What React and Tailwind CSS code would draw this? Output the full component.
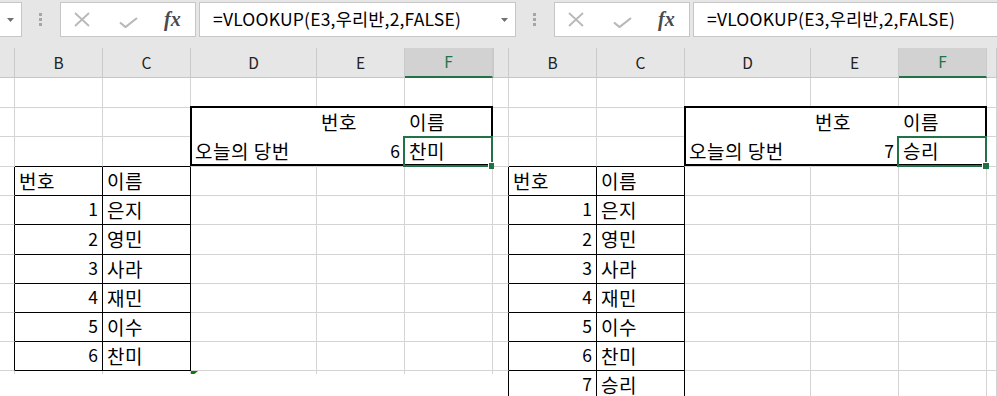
import React from 'react';

const FONT = { fontFamily: '"Noto Sans CJK KR", "Noto Sans", sans-serif' };

const COLS = [
  { key: 'A', w: 'w-[15px]' },
  { key: 'B', w: 'w-[88px]' },
  { key: 'C', w: 'w-[88px]' },
  { key: 'D', w: 'w-[126px]' },
  { key: 'E', w: 'w-[88px]' },
  { key: 'F', w: 'w-[88px]' },
  { key: 'G', w: 'flex-1' },
];

const ROW_H = [
  'h-[30px]', 'h-[29px]', 'h-[30px]', 'h-[29px]', 'h-[29px]', 'h-[30px]',
  'h-[29px]', 'h-[29px]', 'h-[29px]', 'h-[29px]', 'h-[29px]', 'h-[29px]',
];

const NAMES = ['은지', '영민', '사라', '재민', '이수', '찬미', '승리'];

function buildCells(count, pick) {
  const c = {
    E2: { v: '번호' },
    F2: { v: '이름' },
    D3: { v: '오늘의 당번' },
    E3: { v: String(pick), num: true },
    F3: { v: NAMES[pick - 1] },
    B4: { v: '번호' },
    C4: { v: '이름' },
  };
  for (let i = 0; i < count; i++) {
    c['B' + (i + 5)] = { v: String(i + 1), num: true };
    c['C' + (i + 5)] = { v: NAMES[i] };
  }
  return c;
}

function borders(r, col, last) {
  // right edge
  let right = 'border-r-[#d4d4d4]';
  if (['A', 'B', 'C'].includes(col) && r >= 4 && r <= last) right = 'border-r-black';
  if (['D', 'E'].includes(col) && (r === 2 || r === 3)) right = 'border-r-white';
  // bottom edge
  let bottom = 'border-b-[#d4d4d4]';
  if (['B', 'C'].includes(col) && r >= 3 && r <= last) bottom = 'border-b-black';
  if (['D', 'E', 'F'].includes(col) && r === 2) bottom = 'border-b-white';
  return right + ' ' + bottom;
}

function Toolbar() {
  return (
    <div className="h-[48px] bg-[#e6e6e6] pt-[2px] flex items-start">
      <div className="w-[22px] h-[35px] shrink-0 bg-white border-y border-r border-[#c6c6c6] flex items-center pl-[7px]">
        <svg width="7" height="4" viewBox="0 0 7 4">
          <path d="M0 0h7L3.5 4z" fill="#707070" />
        </svg>
      </div>
      <div className="ml-[17px] mt-[11px] flex flex-col gap-[2px] shrink-0">
        <div className="w-[3px] h-[3px] bg-[#a6a6a6]" />
        <div className="w-[3px] h-[3px] bg-[#a6a6a6]" />
        <div className="w-[3px] h-[3px] bg-[#a6a6a6]" />
      </div>
      <div className="ml-[18px] w-[136px] h-[35px] shrink-0 bg-white border border-[#c6c6c6] flex items-center">
        <svg className="ml-[13px]" width="16" height="15" viewBox="0 0 16 15">
          <path d="M1 1L15 14M15 1L1 14" stroke="#b8b8b8" strokeWidth="1.8" fill="none" />
        </svg>
        <svg className="ml-[29px] mt-[5px]" width="19" height="11" viewBox="0 0 19 11">
          <path d="M1 5.5L6.5 10L18 1" stroke="#b8b8b8" strokeWidth="2.2" fill="none" />
        </svg>
        <span
          className="ml-[26px] text-[20px] italic font-semibold text-[#4a4a4a] leading-none -mt-[2px]"
          style={{ fontFamily: '"Liberation Serif", "DejaVu Serif", serif' }}
        >
          fx
        </span>
      </div>
      <div
        className="ml-[3px] flex-1 min-w-0 h-[35px] bg-white border-y border-l border-[#c6c6c6] flex items-center pl-[13px] text-[17.5px] tracking-[0.2px] text-black whitespace-nowrap overflow-hidden"
        style={FONT}
      >
        =VLOOKUP(E3,우리반,2,FALSE)
      </div>
    </div>
  );
}

function HeaderRow() {
  return (
    <div className="flex h-[30px] bg-[#e6e6e6]" style={FONT}>
      {COLS.map(c => (
        <div
          key={c.key}
          className={
            c.w +
            ' shrink-0 flex items-center justify-center text-[15.5px] border-r border-r-[#cacaca] ' +
            (c.key === 'F'
              ? 'bg-[#d2d2d2] text-[#217346] border-b-2 border-b-[#217346]'
              : 'text-[#222] border-b border-b-[#c6c6c6]')
          }
        >
          {c.key === 'A' || c.key === 'G' ? '' : c.key}
        </div>
      ))}
    </div>
  );
}

function Sheet({ width, height, count, pick, triangle }) {
  const cells = buildCells(count, pick);
  const last = count + 4;
  const rows = ROW_H.map((h, i) => i + 1);
  return (
    <div className={'relative shrink-0 overflow-hidden bg-white ' + width + ' ' + height}>
      <Toolbar />
      <HeaderRow />
      <div style={FONT}>
        {rows.map(r => (
          <div key={r} className={'flex ' + ROW_H[r - 1]}>
            {COLS.map(c => {
              const cell = cells[c.key + r];
              return (
                <div
                  key={c.key}
                  className={
                    c.w +
                    ' shrink-0 relative flex items-center pb-[2px] border-r border-b text-black leading-none whitespace-nowrap ' +
                    borders(r, c.key, last) +
                    (cell && cell.num
                      ? ' justify-end pr-[4px] text-[17.5px]'
                      : ' pl-[4px] text-[19px] tracking-[0.5px]')
                  }
                >
                  <span>{cell ? cell.v : ''}</span>
                  {triangle && c.key === 'D' && r === last + 1 && (
                    <svg className="absolute left-0 top-0" width="7" height="6" viewBox="0 0 7 6">
                      <path d="M0 0h7L0 6z" fill="#107c10" />
                    </svg>
                  )}
                </div>
              );
            })}
          </div>
        ))}
      </div>

      {/* thick outline around D2:F3 */}
      <div className="absolute left-[190px] top-[106px] w-[303px] h-[60px] border-2 border-black pointer-events-none" />

      {/* active cell F3 */}
      <div className="absolute left-[403px] top-[136px] w-[90px] h-[31px] border-2 border-[#217346] pointer-events-none" />
      <div className="absolute left-[488px] top-[162px] w-[7px] h-[7px] bg-[#217346] border-l border-t border-white" />
    </div>
  );
}

export default function App() {
  return (
    <div className="w-[997px] h-[396px] flex bg-white overflow-hidden">
      <Sheet width="w-[494px]" height="h-[374px]" count={6} pick={6} triangle />
      <Sheet width="w-[503px]" height="h-[396px]" count={7} pick={7} />
    </div>
  );
}
